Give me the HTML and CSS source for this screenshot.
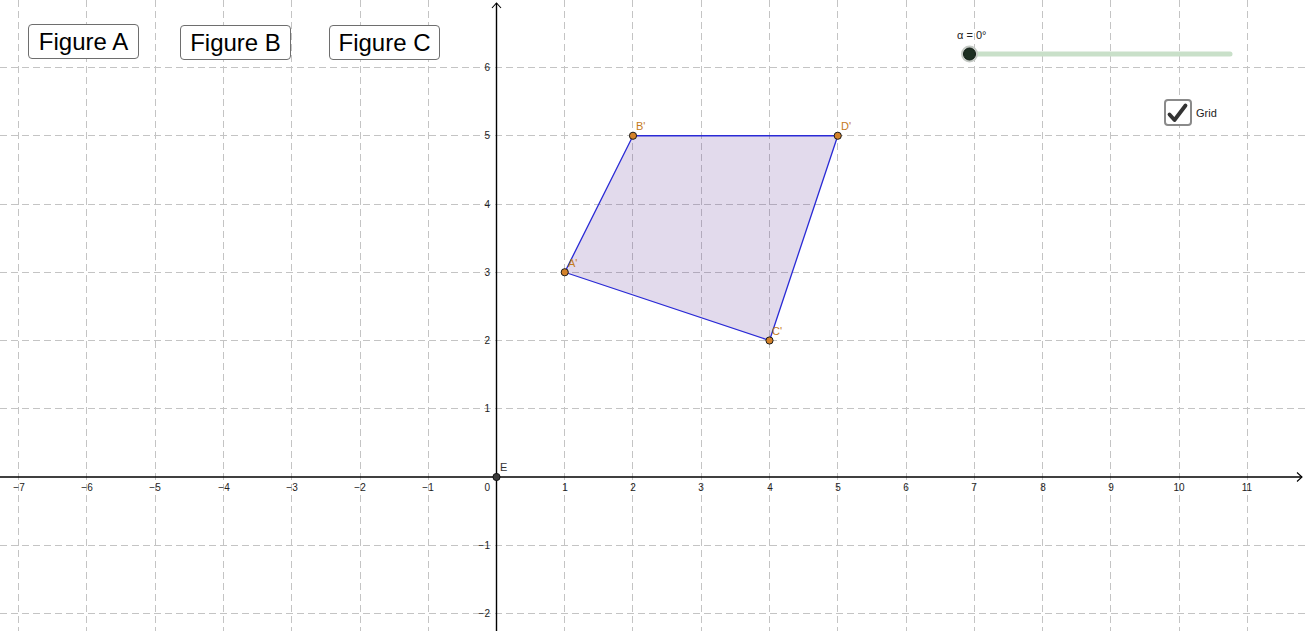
FILE: index.html
```html
<!DOCTYPE html>
<html>
<head>
<meta charset="utf-8">
<link rel="stylesheet" href="styles.css">
</head>
<body>
<div class="applet">
  <svg class="graph" width="1305" height="631" viewBox="0 0 1305 631" xmlns="http://www.w3.org/2000/svg">
    <g class="grid">
      <line x1="18.5" y1="0" x2="18.5" y2="631"/>
      <line x1="86.5" y1="0" x2="86.5" y2="631"/>
      <line x1="155.5" y1="0" x2="155.5" y2="631"/>
      <line x1="223.5" y1="0" x2="223.5" y2="631"/>
      <line x1="291.5" y1="0" x2="291.5" y2="631"/>
      <line x1="360.5" y1="0" x2="360.5" y2="631"/>
      <line x1="428.5" y1="0" x2="428.5" y2="631"/>
      <line x1="564.5" y1="0" x2="564.5" y2="631"/>
      <line x1="632.5" y1="0" x2="632.5" y2="631"/>
      <line x1="701.5" y1="0" x2="701.5" y2="631"/>
      <line x1="769.5" y1="0" x2="769.5" y2="631"/>
      <line x1="837.5" y1="0" x2="837.5" y2="631"/>
      <line x1="906.5" y1="0" x2="906.5" y2="631"/>
      <line x1="974.5" y1="0" x2="974.5" y2="631"/>
      <line x1="1042.5" y1="0" x2="1042.5" y2="631"/>
      <line x1="1110.5" y1="0" x2="1110.5" y2="631"/>
      <line x1="1179.5" y1="0" x2="1179.5" y2="631"/>
      <line x1="1247.5" y1="0" x2="1247.5" y2="631"/>
      <line x1="0" y1="67.5" x2="1305" y2="67.5"/>
      <line x1="0" y1="135.5" x2="1305" y2="135.5"/>
      <line x1="0" y1="204.5" x2="1305" y2="204.5"/>
      <line x1="0" y1="272.5" x2="1305" y2="272.5"/>
      <line x1="0" y1="340.5" x2="1305" y2="340.5"/>
      <line x1="0" y1="408.5" x2="1305" y2="408.5"/>
      <line x1="0" y1="545.5" x2="1305" y2="545.5"/>
      <line x1="0" y1="613.5" x2="1305" y2="613.5"/>
    </g>

    <g class="axes">
      <line x1="0" y1="477" x2="1302" y2="477"/>
      <line x1="496.5" y1="3" x2="496.5" y2="631"/>
      <polyline class="arrow" points="1297,472.5 1302,477 1297,481.5"/>
      <polyline class="arrow" points="492,8 496.5,3 501,8"/>
    </g>

    <g class="xlabels">
      <text x="19" y="491">−7</text>
      <text x="87" y="491">−6</text>
      <text x="155" y="491">−5</text>
      <text x="224" y="491">−4</text>
      <text x="292" y="491">−3</text>
      <text x="360" y="491">−2</text>
      <text x="428" y="491">−1</text>
      <text x="565" y="491">1</text>
      <text x="633" y="491">2</text>
      <text x="701" y="491">3</text>
      <text x="770" y="491">4</text>
      <text x="838" y="491">5</text>
      <text x="906" y="491">6</text>
      <text x="974" y="491">7</text>
      <text x="1043" y="491">8</text>
      <text x="1111" y="491">9</text>
      <text x="1179" y="491">10</text>
      <text x="1247" y="491">11</text>
    </g>
    <g class="ylabels">
      <text x="490" y="71">6</text>
      <text x="490" y="139">5</text>
      <text x="490" y="208">4</text>
      <text x="490" y="276">3</text>
      <text x="490" y="344">2</text>
      <text x="490" y="412">1</text>
      <text x="490" y="491">0</text>
      <text x="490" y="549">−1</text>
      <text x="490" y="617">−2</text>
    </g>

    <polygon class="poly" points="564.75,272.25 633,135.75 837.75,135.75 769.5,340.5"/>

    <g class="pts">
      <circle cx="564.75" cy="272.25" r="3.6"/>
      <circle cx="633" cy="135.75" r="3.6"/>
      <circle cx="837.75" cy="135.75" r="3.6"/>
      <circle cx="769.5" cy="340.5" r="3.6"/>
    </g>
    <g class="ptlabels">
      <text x="568" y="267">A'</text>
      <text x="636" y="130">B'</text>
      <text x="841" y="130">D'</text>
      <text x="772" y="335">C'</text>
    </g>

    <circle class="origin" cx="496.5" cy="477" r="3.6"/>
    <text class="elabel" x="500" y="471">E</text>

    <g class="slider">
      <text class="slabel" x="957" y="39">α = 0°</text>
      <line class="track" x1="969" y1="54" x2="1230" y2="54"/>
      <circle class="halo" cx="969.5" cy="54" r="8.5"/>
      <circle class="knob" cx="969.5" cy="54" r="6"/>
    </g>
  </svg>

  <button class="fig-btn btn-a">Figure A</button>
  <button class="fig-btn btn-b">Figure B</button>
  <button class="fig-btn btn-c">Figure C</button>

  <div class="check">
    <span class="box">
      <svg width="24" height="24" viewBox="0 0 24 24" xmlns="http://www.w3.org/2000/svg">
        <polyline points="3.5,13.5 8.5,19 19.5,4.5" fill="none" stroke="#333" stroke-width="3.8" stroke-linecap="round" stroke-linejoin="round"/>
      </svg>
    </span>
    <span class="check-label">Grid</span>
  </div>
</div>
</body>
</html>
```

FILE: styles.css
```css
html, body {
  margin: 0;
  padding: 0;
  background: #ffffff;
}

.applet {
  position: relative;
  width: 1305px;
  height: 631px;
  overflow: hidden;
  background: #ffffff;
  font-family: "Liberation Sans", Arial, sans-serif;
}

.graph {
  display: block;
}

.grid line {
  stroke: #c4c4c4;
  stroke-width: 1;
  stroke-dasharray: 7 4;
}

.axes line {
  stroke: #000;
  stroke-width: 1.4;
}

.axes .arrow {
  fill: none;
  stroke: #000;
  stroke-width: 1.1;
}

.xlabels text {
  font-family: "Liberation Sans", Arial, sans-serif;
  font-size: 10px;
  fill: #222;
  text-anchor: middle;
}

.ylabels text {
  font-family: "Liberation Sans", Arial, sans-serif;
  font-size: 10px;
  fill: #222;
  text-anchor: end;
}

.poly {
  fill: rgba(110, 70, 160, 0.2);
  stroke: #2a2ad6;
  stroke-width: 1.3;
  stroke-linejoin: round;
}

.pts circle {
  fill: #d4822a;
  stroke: #1a1a1a;
  stroke-width: 1;
}

.ptlabels text {
  font-family: "Liberation Sans", Arial, sans-serif;
  font-size: 11px;
  fill: #c47a20;
}

.origin {
  fill: #3a3a3a;
  stroke: #111;
  stroke-width: 1;
}

.elabel {
  font-family: "Liberation Sans", Arial, sans-serif;
  font-size: 11px;
  fill: #333;
}

.slabel {
  font-family: "Liberation Sans", Arial, sans-serif;
  font-size: 11px;
  fill: #222;
}

.track {
  stroke: #c9e0c9;
  stroke-width: 5;
  stroke-linecap: round;
}

.halo {
  fill: #c4c9c4;
}

.knob {
  fill: #1c2e21;
  stroke: #0e1a12;
  stroke-width: 1;
}

.fig-btn {
  position: absolute;
  box-sizing: border-box;
  height: 35px;
  width: 111px;
  padding: 0;
  margin: 0;
  background: #ffffff;
  border: 1.3px solid #6e6e6e;
  border-radius: 4px;
  font-family: "Liberation Sans", Arial, sans-serif;
  font-size: 24px;
  color: #000;
  line-height: 33px;
  text-align: center;
}

.btn-a {
  left: 28px;
  top: 24px;
}

.btn-b {
  left: 180px;
  top: 25px;
}

.btn-c {
  left: 329px;
  top: 25px;
}

.check {
  position: absolute;
  left: 1164px;
  top: 99px;
  display: flex;
  align-items: center;
  gap: 4px;
}

.check .box {
  box-sizing: border-box;
  width: 28px;
  height: 27px;
  border: 2px solid #8a8a8a;
  border-radius: 4px;
  background: #fff;
  display: flex;
  align-items: center;
  justify-content: center;
}

.check .box svg {
  display: block;
}

.check-label {
  font-family: "Liberation Sans", Arial, sans-serif;
  font-size: 11px;
  color: #222;
}
```
